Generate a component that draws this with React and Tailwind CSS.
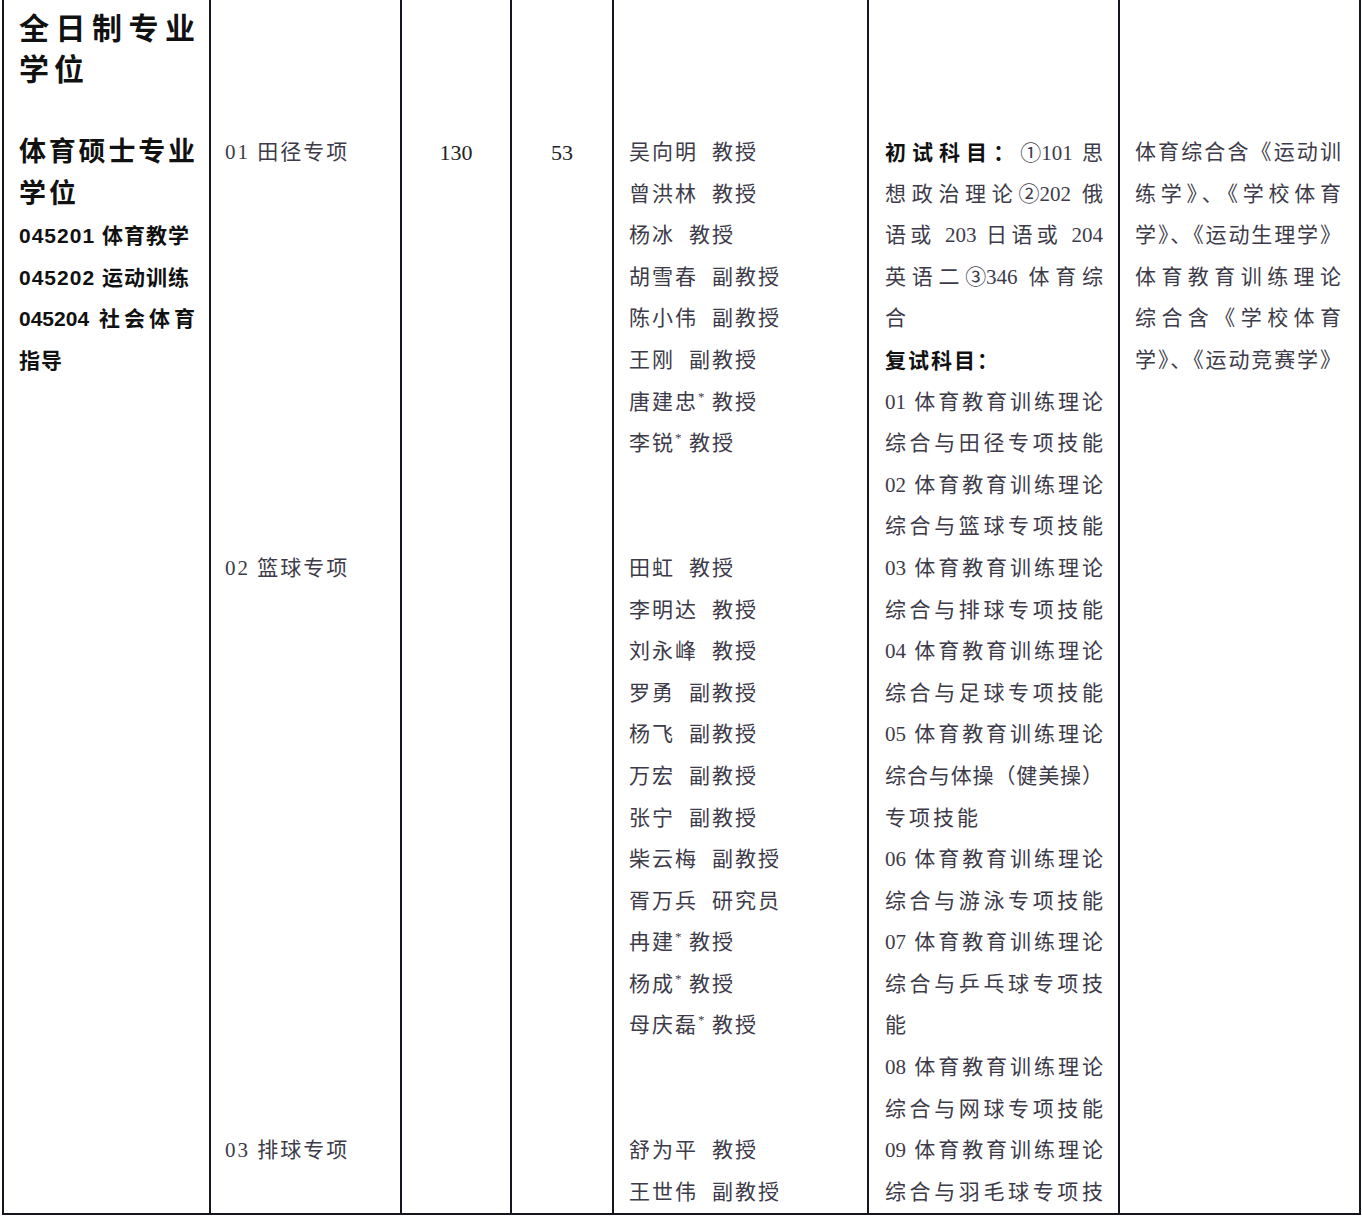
import React from 'react';

const serif = { fontFamily: '"Liberation Serif", "Noto Sans CJK SC", serif' };
const sans = { fontFamily: '"Liberation Sans", "Noto Sans CJK SC", sans-serif' };

const teachers = [
  ['吴向明', '教授'],
  ['曾洪林', '教授'],
  ['杨冰', '教授'],
  ['胡雪春', '副教授'],
  ['陈小伟', '副教授'],
  ['王刚', '副教授'],
  ['唐建忠', '教授', true],
  ['李锐', '教授', true],
  null,
  null,
  ['田虹', '教授'],
  ['李明达', '教授'],
  ['刘永峰', '教授'],
  ['罗勇', '副教授'],
  ['杨飞', '副教授'],
  ['万宏', '副教授'],
  ['张宁', '副教授'],
  ['柴云梅', '副教授'],
  ['胥万兵', '研究员'],
  ['冉建', '教授', true],
  ['杨成', '教授', true],
  ['母庆磊', '教授', true],
  null,
  null,
  ['舒为平', '教授'],
  ['王世伟', '副教授'],
];

// [text, justify]
const subjects = [
  ['01 体育教育训练理论', true],
  ['综合与田径专项技能', true],
  ['02 体育教育训练理论', true],
  ['综合与篮球专项技能', true],
  ['03 体育教育训练理论', true],
  ['综合与排球专项技能', true],
  ['04 体育教育训练理论', true],
  ['综合与足球专项技能', true],
  ['05 体育教育训练理论', true],
  ['综合与体操（健美操）', true],
  ['专项技能', false],
  ['06 体育教育训练理论', true],
  ['综合与游泳专项技能', true],
  ['07 体育教育训练理论', true],
  ['综合与乒乓球专项技', true],
  ['能', false],
  ['08 体育教育训练理论', true],
  ['综合与网球专项技能', true],
  ['09 体育教育训练理论', true],
  ['综合与羽毛球专项技', true],
];

const books = [
  '体育综合含《运动训',
  '练学》、《学校体育',
  '学》、《运动生理学》',
  '体育教育训练理论',
  '综合含《学校体育',
  '学》、《运动竞赛学》',
];

const Line = ({ children, justify, className = '' }) => (
  <div
    className={`h-[41.6px] leading-[41.6px] whitespace-nowrap ${
      justify ? 'text-justify [text-align-last:justify]' : ''
    } ${className}`}
  >
    {children}
  </div>
);

// keeps a circled number and its code together so justify doesn't split them
const Code = ({ children }) => <span className="inline-block">{children}</span>;

export default function App() {
  return (
    <div className="min-h-screen bg-white text-[#3d3b49]" style={serif}>
      <div className="ml-[2px] w-[1359px] grid grid-cols-[207px_191px_110px_102px_255px_251px_241px] border-l-2 border-b-2 border-[#15151f]">
        {/* Column 1: degree type */}
        <div className="border-r-2 border-[#15151f] pl-[15px] pr-[14px] text-[#111]" style={sans}>
          <div className="h-[132px] pt-[8px] font-bold text-[30px]">
            <Line justify className="h-[40px] leading-[40px]">全日制专业</Line>
            <div className="h-[40px] leading-[40px] tracking-[5px]">学位</div>
          </div>
          <div className="font-bold">
            <Line justify className="text-[27px]">体育硕士专业</Line>
            <Line className="text-[27px] tracking-[3px]">学位</Line>
            <Line className="text-[21px] tracking-[1px]">045201 体育教学</Line>
            <Line className="text-[21px] tracking-[1px]">045202 运动训练</Line>
            <Line justify className="text-[21px]">045204 社会体育</Line>
            <Line className="text-[21px] tracking-[1px]">指导</Line>
          </div>
        </div>

        {/* Column 2: research direction */}
        <div className="border-r-2 border-[#15151f] pl-[14px] pt-[132px] text-[21px] tracking-[2px]">
          <Line>01 田径专项</Line>
          {Array.from({ length: 9 }).map((_, i) => (
            <Line key={i} />
          ))}
          <Line>02 篮球专项</Line>
          {Array.from({ length: 13 }).map((_, i) => (
            <Line key={'b' + i} />
          ))}
          <Line>03 排球专项</Line>
        </div>

        {/* Column 3 */}
        <div className="border-r-2 border-[#15151f] pt-[132px] text-center text-[22px] text-[#222]">
          <Line>130</Line>
        </div>

        {/* Column 4 */}
        <div className="border-r-2 border-[#15151f] pt-[132px] text-center text-[22px] text-[#222]">
          <Line>53</Line>
        </div>

        {/* Column 5: supervisors */}
        <div className="border-r-2 border-[#15151f] pl-[15px] pt-[132px] text-[21px] tracking-[2px]">
          {teachers.map((t, i) =>
            t ? (
              <Line key={i}>
                <span>{t[0]}</span>
                <span className="inline-block w-[14px] text-[13px] align-top leading-[30px]">
                  {t[2] ? '*' : ''}
                </span>
                <span>{t[1]}</span>
              </Line>
            ) : (
              <Line key={i} />
            )
          )}
        </div>

        {/* Column 6: exam subjects */}
        <div className="border-r-2 border-[#15151f] pl-[16px] pr-[15px] pt-[132px] text-[21px]">
          <Line justify>
            <b className="font-bold text-[#111] tracking-[2px]" style={sans}>初试科目：</b><Code>①101</Code> 思
          </Line>
          <Line justify>想政治理论<Code>②202</Code> 俄</Line>
          <Line justify>语或 203 日语或 204</Line>
          <Line justify>英语二<Code>③346</Code> 体育综</Line>
          <Line>合</Line>
          <Line>
            <b className="font-bold text-[#111] tracking-[2px]" style={sans}>复试科目：</b>
          </Line>
          {subjects.map(([text, j], i) => (
            <Line key={i} justify={j} className={j ? '' : 'tracking-[3px]'}>
              {text}
            </Line>
          ))}
        </div>

        {/* Column 7: reference books */}
        <div className="border-r-2 border-[#15151f] pl-[15px] pr-[18px] pt-[132px] text-[21px]">
          {books.map((b, i) => (
            <Line key={i} justify>
              {b}
            </Line>
          ))}
        </div>
      </div>
    </div>
  );
}
